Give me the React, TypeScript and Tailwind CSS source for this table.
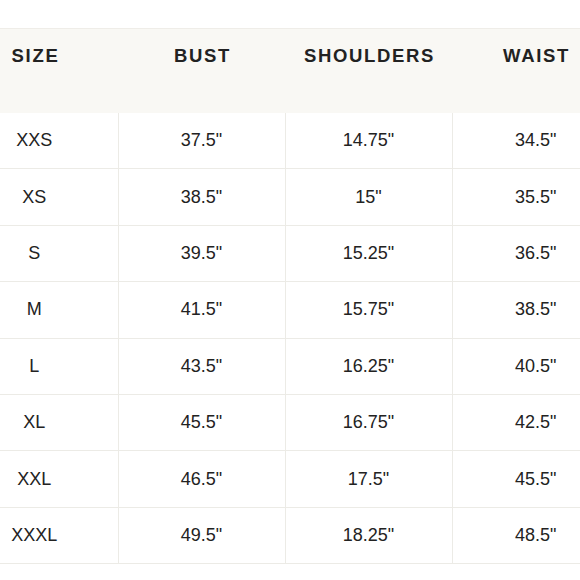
const rows = [
  ["XXS", "37.5\"", "14.75\"", "34.5\""],
  ["XS", "38.5\"", "15\"", "35.5\""],
  ["S", "39.5\"", "15.25\"", "36.5\""],
  ["M", "41.5\"", "15.75\"", "38.5\""],
  ["L", "43.5\"", "16.25\"", "40.5\""],
  ["XL", "45.5\"", "16.75\"", "42.5\""],
  ["XXL", "46.5\"", "17.5\"", "45.5\""],
  ["XXXL", "49.5\"", "18.25\"", "48.5\""],
];

const headers = ["SIZE", "BUST", "SHOULDERS", "WAIST"];

export default function App() {
  return (
    <div className="w-[580px] h-[580px] overflow-hidden bg-white pt-[28px]">
      <table
        className="ml-[-49px] border-collapse table-fixed w-[668px] text-[#222]"
        style={{ fontFamily: '"Liberation Sans", Arial, sans-serif' }}
      >
        <thead>
          <tr className="bg-[#f9f8f4] border-t border-[#efede8]">
            {headers.map((h) => (
              <th
                key={h}
                className="w-[167px] h-[84px] align-top pt-[16px] pl-[2px] text-center text-[18.5px] leading-[22px] font-bold tracking-[0.09em]"
              >
                {h}
              </th>
            ))}
          </tr>
        </thead>
        <tbody>
          {rows.map((r) => (
            <tr key={r[0]} className="border-b border-[#ecebe6]">
              {r.map((c, i) => (
                <td
                  key={i}
                  className="h-[56.4px] text-center text-[18px] border-l border-[#ecebe6] first:border-l-0"
                >
                  {c}
                </td>
              ))}
            </tr>
          ))}
        </tbody>
      </table>
    </div>
  );
}
